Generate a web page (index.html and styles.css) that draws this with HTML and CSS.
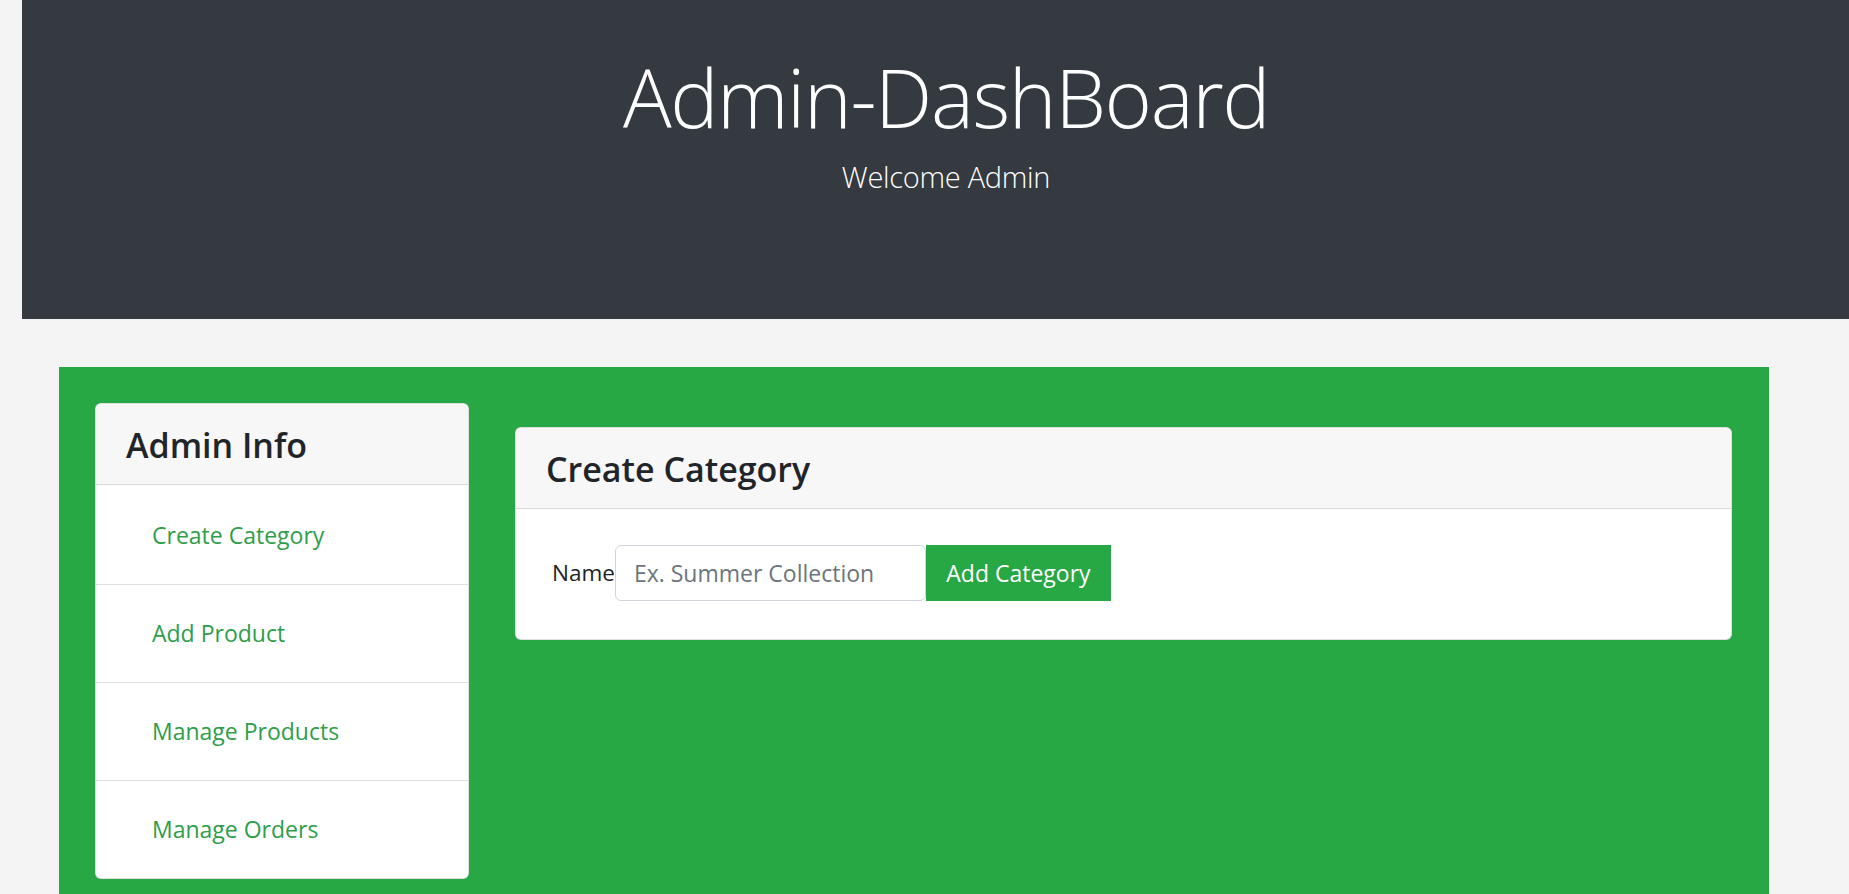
FILE: index.html
```html
<!DOCTYPE html>
<html lang="en">
<head>
<meta charset="utf-8">
<title>Admin-DashBoard</title>
<link rel="stylesheet" href="styles.css">
</head>
<body>
<header class="hero">
  <h1 class="hero-title">Admin-DashBoard</h1>
  <p class="hero-lead">Welcome Admin</p>
</header>
<main class="panel">
  <aside class="card side-card">
    <div class="card-header">
      <h3 class="card-title">Admin Info</h3>
    </div>
    <ul class="list-group">
      <li class="list-item"><a class="nav-link" href="#">Create Category</a></li>
      <li class="list-item"><a class="nav-link" href="#">Add Product</a></li>
      <li class="list-item"><a class="nav-link" href="#">Manage Products</a></li>
      <li class="list-item"><a class="nav-link" href="#">Manage Orders</a></li>
    </ul>
  </aside>
  <section class="card main-card">
    <div class="card-header">
      <h4 class="card-title main-title">Create Category</h4>
    </div>
    <form class="card-body">
      <label class="form-label" for="name">Name</label>
      <input class="form-input" id="name" type="text" placeholder="Ex. Summer Collection">
      <button class="btn-add" type="button">Add Category</button>
    </form>
  </section>
</main>
</body>
</html>
```
FILE: styles.css
```css
* { box-sizing: border-box; }
html, body { margin: 0; padding: 0; }
body {
  background: #f4f4f4;
  font-family: "Open Sans", "Noto Sans", sans-serif;
  font-size: 24px;
  line-height: 1.5;
  color: #212529;
  overflow: hidden;
}
.hero {
  margin-left: 22px;
  height: 319px;
  padding: 48px 0 0 21px;
  background: #343a40;
  color: #fff;
  text-align: center;
}
.hero-title {
  margin: 0;
  font-size: 81px;
  font-weight: 300;
  line-height: 1.2;
  letter-spacing: -1.4px;
}
.hero-lead {
  margin: 10px 0 0;
  font-size: 29px;
  font-weight: 300;
  line-height: 1.5;
  letter-spacing: -0.3px;
}
.panel {
  margin: 48px 0 0 59px;
  width: 1710px;
  height: 527px;
  padding: 36px 37px 0 36px;
  background: #28a745;
  display: flex;
  align-items: flex-start;
  gap: 46px;
}
.card {
  background: #fff;
  border: 1px solid rgba(0,0,0,.125);
  border-radius: 6px;
  overflow: hidden;
}
.side-card { width: 374px; flex: none; }
.main-card { flex: 1; margin-top: 24px; }
.card-header {
  background: #f7f7f7;
  border-bottom: 1px solid rgba(0,0,0,.125);
  padding: 21px 30px 18px;
}
.card-title {
  margin: 0;
  font-size: 34px;
  font-weight: 600;
  line-height: 1.2;
  color: #212529;
}
.main-title { font-size: 34px; font-weight: 600; }
.list-group {
  list-style: none;
  margin: 0;
  padding: 0;
}
.list-item {
  padding: 18px 30px;
  border-top: 1px solid rgba(0,0,0,.125);
}
.list-item:first-child { border-top: 0; padding-top: 20px; }
.nav-link {
  display: block;
  padding: 12px 26px;
  font-size: 23px;
  line-height: 37px;
  color: #2f9e4a;
  text-decoration: none;
}
.card-body {
  display: flex;
  align-items: center;
  padding: 36px 30px 38px 36px;
  margin: 0;
}
.form-label { font-size: 22.5px; line-height: 1.5; }
.form-input {
  width: 311px;
  height: 56px;
  padding: 9px 18px;
  border: 1px solid #ced4da;
  border-radius: 6px;
  font-family: inherit;
  font-size: 23px;
  color: #495057;
  background: #fff;
}
.form-input::placeholder { color: #6c757d; }
.btn-add {
  width: 185px;
  height: 56px;
  border: 1px solid #28a745;
  border-radius: 0;
  background: #28a745;
  color: #fff;
  font-family: inherit;
  font-size: 23px;
  padding: 0;
}
```
